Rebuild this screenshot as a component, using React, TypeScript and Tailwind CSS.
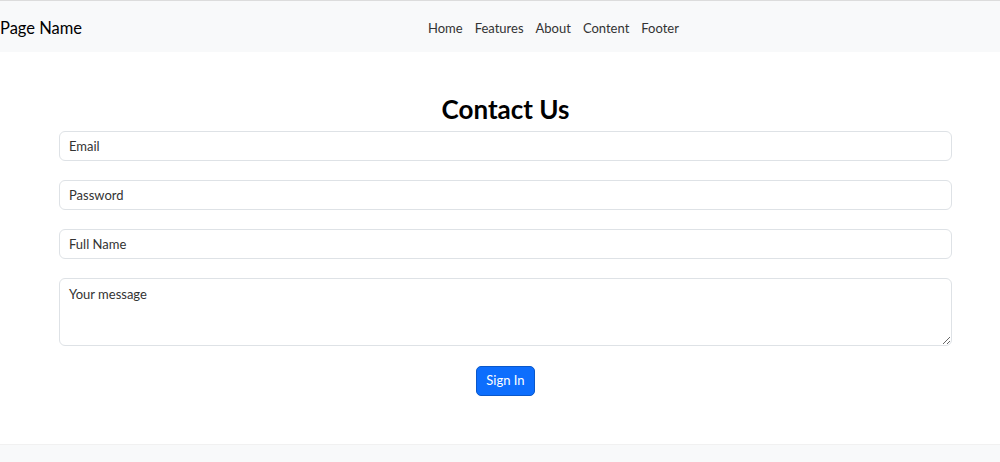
export default function App() {
  const font = { fontFamily: 'Lato, "Open Sans", sans-serif' };
  const fields = ["Email", "Password", "Full Name"];
  return (
    <div className="min-h-[462px] bg-white text-[#212529]" style={font}>
      <nav className="h-[52px] border-t border-[#dcdcdc] bg-[#f8f9fa] flex items-center pt-[4px]">
        <a className="w-[80px] text-[16.5px] text-black leading-none whitespace-nowrap">Page Name</a>
        <ul className="flex gap-[12px] ml-[348px] text-[13px] text-[#333]">
          <li>Home</li>
          <li>Features</li>
          <li>About</li>
          <li>Content</li>
          <li>Footer</li>
        </ul>
      </nav>
      <main className="ml-[59px] mr-[48px] pt-[41px] pb-[48px]">
        <h1 className="text-center text-[26px] font-bold text-black leading-[32px] mb-[6px]">
          Contact Us
        </h1>
        <form className="flex flex-col gap-[19px]">
          {fields.map((f) => (
            <input
              key={f}
              placeholder={f}
              className="h-[30px] w-full rounded-[6px] border border-[#dee2e6] px-[9px] text-[13px] placeholder:text-[#333] outline-none"
            />
          ))}
          <textarea
            placeholder="Your message"
            className="h-[68px] w-full rounded-[6px] border border-[#dee2e6] px-[9px] py-[6px] text-[13px] placeholder:text-[#333] outline-none"
          />
          <div className="flex justify-center pt-[1px]">
            <button
              type="button"
              className="h-[30px] w-[59px] rounded-[5px] bg-[#0d6efd] text-white text-[13px] border border-[#0a58ca]"
            >
              Sign In
            </button>
          </div>
        </form>
      </main>
      <footer className="h-[19px] bg-[#f8f9fa] border-t border-[#f1f1f1]" />
    </div>
  );
}
